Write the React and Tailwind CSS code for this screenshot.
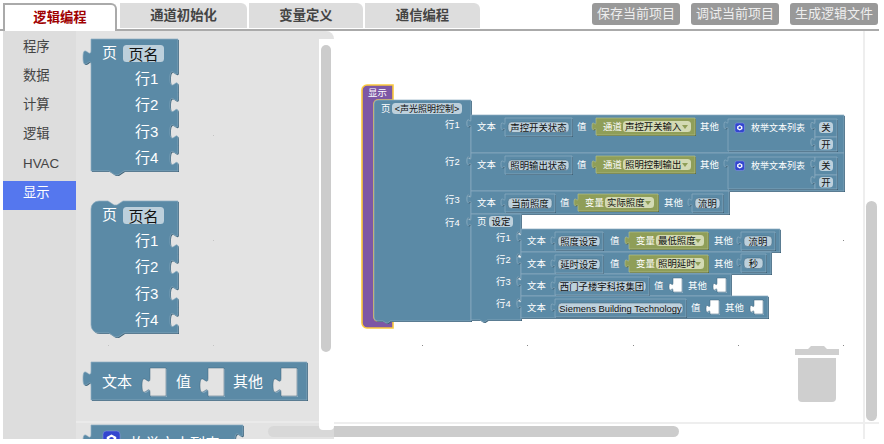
const BLUE = { fill: "#5b8aa6", light: "#8cadc2", dark: "#3f6379" };
const OLIVE = { fill: "#8f9e58", light: "#b3be8a", dark: "#64703c" };
const PURPLE = { fill: "#7d57a5", light: "#7d57a5", dark: "#7d57a5" };

const tabs = ["逻辑编程", "通道初始化", "变量定义", "通信编程"];
const tabWidths = ["w-[114px]", "w-[127px]", "w-[114px]", "w-[115px]"];
const actions = ["保存当前项目", "调试当前项目", "生成逻辑文件"];
const menu = ["程序", "数据", "计算", "逻辑", "HVAC", "显示"];

// same puzzle tab shapes as the blockly renderer, s is the workspace scale
function blockPath({ x, y, w, h, s = 1, out, notches = [], topNotch, bottomNotch = true, round }) {
  const T = 8 * s;
  const r = 8 * s;
  let d = round ? `M${x},${y + r} a${r},${r} 0 0 1 ${r},${-r}` : `M${x},${y}`;
  if (topNotch) d += ` H${x + 17 * s} l${6 * s},${4 * s} ${3 * s},0 ${6 * s},${-4 * s}`;
  d += ` H${x + w}`;
  notches.forEach((n) => {
    d += ` V${y + n} v${5 * s} c0,${10 * s} ${-T},${-8 * s} ${-T},${7.5 * s} s${T},${-2.5 * s} ${T},${7.5 * s}`;
  });
  d += ` V${y + h}`;
  if (bottomNotch) d += ` H${x + 33 * s} l${-6 * s},${4 * s} ${-3 * s},0 ${-6 * s},${-4 * s}`;
  if (round) d += ` H${x + r} a${r},${r} 0 0 1 ${-r},${-r}`;
  else d += ` H${x}`;
  if (out !== undefined) {
    d += ` V${y + out + 20 * s} c0,${-10 * s} ${-T},${8 * s} ${-T},${-7.5 * s} s${T},${2.5 * s} ${T},${-7.5 * s}`;
  }
  return d + " Z";
}

function Block({ color = BLUE, ...rest }) {
  const d = blockPath(rest);
  return (
    <g>
      <path d={d} fill={color.dark} transform="translate(1,1)" />
      <path d={d} fill={color.fill} stroke={color.light} strokeWidth="0.7" />
    </g>
  );
}

// empty value input, the background shows through
function Hole({ x, y, w, h, s = 1, bg }) {
  const T = 8 * s;
  const d = `M${x},${y} h${w} v${h} h${-w} V${y + 5 * s + 20 * s} c0,${-10 * s} ${-T},${8 * s} ${-T},${-7.5 * s} s${T},${2.5 * s} ${T},${-7.5 * s} Z`;
  return (
    <g>
      <path d={d} fill={BLUE.light} transform="translate(1,1)" />
      <path d={d} fill={bg} stroke={BLUE.dark} strokeWidth="0.5" />
    </g>
  );
}

const Label = ({ x, y, size = 9.4, children, fill = "#fff", anchor }) => (
  <text x={x} y={y} fontSize={size} fill={fill} textAnchor={anchor}>
    {children}
  </text>
);

function Field({ x, y, w, h = 11, text, size = 9.4, edge }) {
  return (
    <g>
      <rect x={x} y={y} width={w} height={h} rx="3.5" fill="#bdd0dc" stroke={edge} strokeWidth="0.6" />
      <text x={x + w / 2} y={y + h - 2} fontSize={size} fill="#111" textAnchor="middle">
        {text}
      </text>
    </g>
  );
}

// small text shadow block, the value plugged in a text slot
function TextBlock({ x, y, w, h = 18, text }) {
  return (
    <g>
      <Block x={x} y={y} w={w} h={h} s={0.5} out={2} bottomNotch={false} />
      <Field x={x + 3} y={y + 4} w={w - 6} h={10.5} text={text} edge="#4a6f86" />
    </g>
  );
}

function DropBlock({ x, y, w, kind, text, fieldX }) {
  return (
    <g>
      <Block x={x} y={y} w={w} h={17} s={0.5} out={2} color={OLIVE} bottomNotch={false} />
      <Label x={x + 7} y={y + 12}>
        {kind}
      </Label>
      <rect x={fieldX} y={y + 3} width={x + w - fieldX - 4} height={11} rx="3.5" fill="#d3dab4" />
      <text x={fieldX + 2} y={y + 12} fontSize="9.4" fill="#111">
        {text}
      </text>
      <path d={`M${x + w - 13},${y + 7} h6 l-3,4 Z`} fill="#8f9e58" />
    </g>
  );
}

function EnumIcon({ x, y, size }) {
  const c = size / 2;
  return (
    <g transform={`translate(${x},${y})`}>
      <rect width={size} height={size} rx={size / 5} fill="#3346cf" stroke="#8d9ae8" strokeWidth="0.5" />
      <path
        d={`M${c},${size * 0.2} L${size * 0.78},${size * 0.36} V${size * 0.64} L${c},${size * 0.8} L${size * 0.22},${size * 0.64} V${size * 0.36} Z`}
        fill="#fff"
      />
      <circle cx={c} cy={c} r={size * 0.14} fill="#3346cf" />
    </g>
  );
}

function EnumBlock({ x, y }) {
  return (
    <g>
      <Block x={x} y={y} w={87} h={32} s={0.5} out={0} notches={[0.5, 16.5]} bottomNotch={false} />
      <EnumIcon x={x + 7} y={y + 4} size={9.5} />
      <Label x={x + 23} y={y + 12} size={9}>
        枚举文本列表
      </Label>
      <Block x={x + 87} y={y} w={22} h={18} s={0.5} out={0.5} bottomNotch={false} />
      <Field x={x + 91} y={y + 3} w={14} h={11} text="关" />
      <Block x={x + 87} y={y + 18} w={22} h={14} s={0.5} out={-1} bottomNotch={false} />
      <Field x={x + 91} y={y + 20} w={14} h={10.5} text="开" />
    </g>
  );
}

function PageFlyout({ y, round, titleY }) {
  return (
    <g>
      <Block x={91} y={y} w={87} h={132} out={round ? undefined : 6} round={round} topNotch={round} notches={[0, 1, 2, 3].map((i) => 27 + i * 26.5)} />
      <Label x={102} y={titleY} size={15}>
        页
      </Label>
      <Field x={123} y={titleY - 13} w={41} h={17} text="页名" size={15} />
      {[0, 1, 2, 3].map((i) => (
        <Label key={i} x={135} y={titleY + 26 + i * 26.3} size={15}>
          {"行" + (i + 1)}
        </Label>
      ))}
    </g>
  );
}

function Flyout() {
  return (
    <svg viewBox="76 31 258 413" className="absolute inset-0 w-[258px] h-[413px]">
      {[108, 213].map((gx) =>
        [135, 240, 345].map((gy) => <rect key={gx + "-" + gy} x={gx} y={gy} width="1" height="1" fill="#c4c4c4" />)
      )}
      <PageFlyout y={39} titleY={58} />
      <PageFlyout y={201} titleY={220} round />
      <Block x={91} y={362} w={216} h={38} out={4} bottomNotch={false} />
      <Label x={102} y={387} size={15}>
        文本
      </Label>
      <Hole x={150} y={368} w={16} h={28} bg="#e3e3e3" />
      <Label x={176} y={387} size={15}>
        值
      </Label>
      <Hole x={208} y={368} w={16} h={28} bg="#e3e3e3" />
      <Label x={233} y={387} size={15}>
        其他
      </Label>
      <Hole x={281} y={368} w={16} h={28} bg="#e3e3e3" />
      <Block x={91} y={425} w={152} h={40} out={4} notches={[3]} bottomNotch={false} />
      <EnumIcon x={103} y={431} size={17} />
      <Label x={130} y={449} size={15}>
        枚举文本列表
      </Label>
    </svg>
  );
}

// one of the long 文本 rows in the workspace
function TextRow({ y, h, right, x0, label, fieldW, valX, other, kind, drop, dropX, dropW, dropField, children }) {
  return (
    <g>
      <Block x={x0} y={y} w={right - x0} h={h} s={0.5} out={2} bottomNotch={false} />
      <Label x={x0 + 6} y={y + 15}>
        文本
      </Label>
      <TextBlock x={x0 + 34} y={y + 3} w={fieldW} text={label} />
      <Label x={valX} y={y + 15}>
        值
      </Label>
      {kind && <DropBlock x={dropX} y={y + 3} w={dropW} kind={kind} text={drop} fieldX={dropField} />}
      <Label x={other} y={y + 15}>
        其他
      </Label>
      {children}
    </g>
  );
}

function Workspace() {
  const dots = [];
  [422, 527, 633, 738, 843].forEach((gx) =>
    [135, 240, 345].forEach((gy) => {
      dots.push(<rect key={gx + "-" + gy} x={gx} y={gy} width="1" height="1" fill="#888" />);
    })
  );
  return (
    <svg viewBox="334 31 550 413" className="absolute inset-0 w-[550px] h-[413px]">
      {dots}
      {/* purple 显示 block, selected so it gets the yellow outline */}
      <path
        d="M362,90 a5,5 0 0 1 5,-5 H393 V100 H378 a4,4 0 0 0 -4,4 V317 a4,4 0 0 0 4,4 H393 V328 H367 a5,5 0 0 1 -5,-5 Z"
        fill={PURPLE.fill}
        stroke="#fbc93d"
        strokeWidth="1.6"
      />
      <Label x={368} y={96}>
        显示
      </Label>

      <Block x={374} y={100} w={97} h={221} s={0.5} round notches={[17, 54, 92, 115]} />
      <Label x={381} y={112}>
        页
      </Label>
      <Field x={392} y={103} w={70} text="<声光照明控制>" size={9} />
      <Label x={445} y={128}>
        行1
      </Label>
      <Label x={445} y={165}>
        行2
      </Label>
      <Label x={445} y={203}>
        行3
      </Label>
      <Label x={445} y={226}>
        行4
      </Label>

      <TextRow y={115} h={38} x0={471} right={844} label="声控开关状态" fieldW={67} valX={577} other={700} kind="通道" drop="声控开关输入" dropX={596} dropW={99} dropField={623}>
        <EnumBlock x={728} y={119} />
      </TextRow>
      <TextRow y={153} h={38} x0={471} right={844} label="照明输出状态" fieldW={67} valX={577} other={700} kind="通道" drop="照明控制输出" dropX={596} dropW={99} dropField={623}>
        <EnumBlock x={728} y={157} />
      </TextRow>
      <TextRow y={191} h={23} x0={471} right={729} label="当前照度" fieldW={50} valX={560} other={664} kind="变量" drop="实际照度" dropX={578} dropW={80} dropField={605}>
        <TextBlock x={692} y={194} w={31} text="流明" />
      </TextRow>

      <Block x={471} y={214} w={50} h={106} s={0.5} out={2} notches={[15, 37, 60, 82]} />
      <Label x={477} y={225}>
        页
      </Label>
      <Field x={489} y={216} w={24} text="设定" />
      {["行1", "行2", "行3", "行4"].map((t, i) => (
        <Label key={t} x={496} y={241 + i * 22}>
          {t}
        </Label>
      ))}

      <TextRow y={229} h={23} x0={521} right={780} label="照度设定" fieldW={48} valX={610} other={714} kind="变量" drop="最低照度" dropX={629} dropW={79} dropField={656}>
        <TextBlock x={741} y={232} w={34} text="流明" />
      </TextRow>
      <TextRow y={252} h={22} x0={521} right={771} label="延时设定" fieldW={48} valX={610} other={714} kind="变量" drop="照明延时" dropX={629} dropW={79} dropField={656}>
        <TextBlock x={741} y={254} w={25} text="秒" />
      </TextRow>
      <TextRow y={274} h={22} x0={521} right={731} label="西门子楼宇科技集团" fieldW={94} valX={654} other={688}>
        <Hole x={673} y={278} w={9} h={14} s={0.5} bg="#fff" />
        <Hole x={717} y={278} w={9} h={14} s={0.5} bg="#fff" />
      </TextRow>
      <TextRow y={296} h={22} x0={521} right={768} label="Siemens Building Technology" fieldW={131} valX={691} other={725}>
        <Hole x={710} y={300} w={9} h={14} s={0.5} bg="#fff" />
        <Hole x={754} y={300} w={9} h={14} s={0.5} bg="#fff" />
      </TextRow>

      {/* trash can */}
      <path d="M795,349 h13 l3,-3 h13 l3,3 h12 v6 h-44 Z" fill="#cfcfcf" />
      <path d="M798,358 h38 v40 a4,4 0 0 1 -4,4 h-30 a4,4 0 0 1 -4,-4 Z" fill="#cfcfcf" />
    </svg>
  );
}

export default function App() {
  return (
    <div className="w-[884px] h-[444px] bg-white">
      <div className="w-[879px] h-[439px] overflow-hidden flex flex-col [font-family:'Liberation_Sans','Noto_Sans_CJK_SC',sans-serif]">
        <div className="h-[31px] shrink-0 flex items-start pl-[3px] pt-[3px] pr-[1px] border-b-2 border-[#aaa]">
          <div className="flex gap-[2px] h-[27px]">
            {tabs.map((t, i) => (
              <div
                key={t}
                className={
                  i === 0
                    ? "w-[114px] mr-[1px] h-[28px] bg-white border-2 border-b-0 border-[#aaa] rounded-tr-md flex items-center justify-center text-[13.33px] font-bold text-[#a00000] z-10"
                    : tabWidths[i] + " h-[25px] bg-[#ddd] rounded-tr-md flex items-center justify-center text-[13.33px] font-bold text-[#444]"
                }
              >
                {t}
              </div>
            ))}
          </div>
          <div className="ml-auto flex gap-[11px]">
            {actions.map((a) => (
              <button key={a} className="w-[88px] h-[22px] rounded-[3px] bg-[#999] text-[#eee] text-[13px] leading-[22px]">
                {a}
              </button>
            ))}
          </div>
        </div>

        <div className="flex-1 flex pl-[3px] relative">
          <div className="w-[73px] bg-[#ddd] pt-[3.5px] text-[13.33px] text-[#444]">
            {menu.map((m) => (
              <div key={m} className={"h-[29.3px] pl-[20px] leading-[23px] " + (m === "显示" ? "bg-[#5577ee] text-white" : "")}>
                {m}
              </div>
            ))}
          </div>

          <div className="w-[258px] relative bg-[#e3e3e3] rounded-tr-lg shrink-0">
            <Flyout />
          </div>

          <div className="flex-1 relative">
            <Workspace />
            {/* vertical workspace scrollbar */}
            <div className="absolute left-[529px] top-0 bottom-0 border-l-2 border-[#eee] w-[16px]">
              <div className="absolute left-[1px] top-[170px] w-[11px] h-[220px] rounded-md bg-[#ccc]" />
            </div>
          </div>

          {/* horizontal scrollbar, the flyout washes out the part that runs under it */}
          <div className="absolute left-[334px] right-0 top-[391px] border-t-2 border-[#eee] h-[16px]" />
          <div className="absolute left-[76px] w-[258px] top-[390px] border-t-2 border-[#eaeaea]" />
          <div className="absolute left-[268px] top-[395px] w-[66px] h-[11px] rounded-l-md bg-[#d8d8d8]" />
          <div className="absolute left-[334px] top-[395px] w-[345px] h-[11px] rounded-r-md bg-[#ccc]" />
          <div className="absolute left-[319px] top-[8px] w-[15px] h-[391px] bg-white rounded-b-sm">
            <div className="absolute left-[2px] top-[6px] w-[10px] h-[307px] rounded-md bg-[#ccc]" />
          </div>
        </div>
      </div>
    </div>
  );
}
